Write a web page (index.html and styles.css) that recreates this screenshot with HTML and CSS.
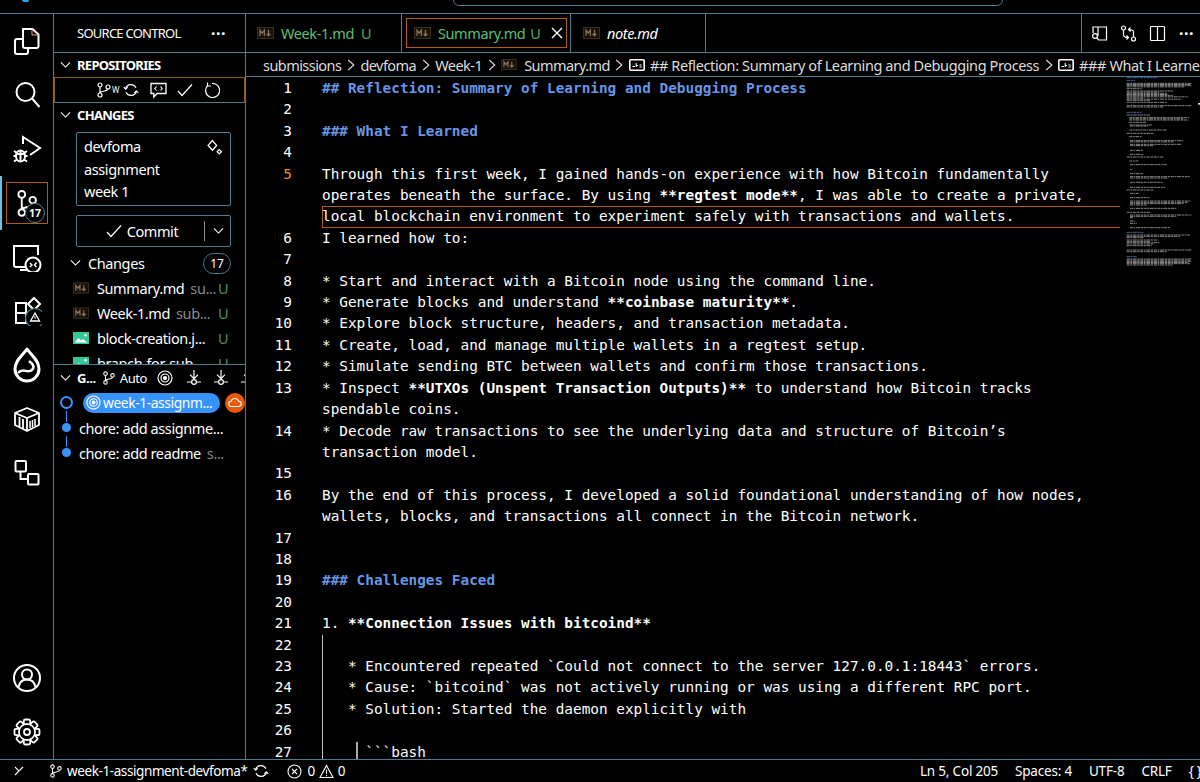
FILE: index.html
```html
<!DOCTYPE html>
<html lang="en">
<head>
<meta charset="utf-8">
<title>Summary.md - VS Code</title>
<link rel="stylesheet" href="styles.css">
</head>
<body>
<svg class="defs" aria-hidden="true">
  <defs>
    <symbol id="md" viewBox="0 0 17 12"><rect x=".5" y=".5" width="16" height="11" fill="#1a120a" stroke="#3d2c1c"/><path d="M3 9V3.200l2.200 3 2.200-3V9M11.500 3v5.600M9.600 6.800l1.900 2 1.900-2" fill="none" stroke="#86725c" stroke-width="1.300"/></symbol>
    <symbol id="img" viewBox="0 0 16 12"><rect width="16" height="12" fill="#37c59a"/><path d="M1.500 10.500l4-4.500 2.500 2.500 2-1.500 4.500 3.500z" fill="#fff"/><circle cx="12.500" cy="3.200" r="1.200" fill="#fff"/></symbol>
    <symbol id="abc" viewBox="0 0 16 12"><rect x=".8" y=".8" width="14.400" height="10.400" rx="1" fill="#000" stroke="#fff" stroke-width="1.600"/><path d="M3.500 7.500h2.500M7.200 4v4M7.200 6.500h1.800M10.500 6h2.200M10.500 8h2.200" stroke="#fff" stroke-width="1.100"/></symbol>
    <symbol id="chev" viewBox="0 0 12 8"><path d="M1 1.200l5 5 5-5" fill="none" stroke="#fff" stroke-width="1.200"/></symbol>
    <symbol id="crumb" viewBox="0 0 8 12"><path d="M1.200 1l5.600 5-5.600 5" fill="none" stroke="#ddd" stroke-width="1.100"/></symbol>
    <symbol id="branch" viewBox="0 0 16 16"><g fill="none" stroke="#fff" stroke-width="1.200"><circle cx="4" cy="3" r="2"/><circle cx="4" cy="13" r="2"/><circle cx="12" cy="5" r="2"/><path d="M4 5v6M12 7c0 2.500-7 1.500-8 4"/></g></symbol>
    <symbol id="sync" viewBox="0 0 16 16"><g fill="none" stroke="#fff" stroke-width="1.200"><path d="M2.600 6.500A5.600 5.600 0 0 1 13 5.800M13.400 9.500A5.600 5.600 0 0 1 3 10.200"/><path d="M.8 5.200l1.900 2 1.900-2M11.400 10.800l1.900-2 1.900 2"/></g></symbol>
    <symbol id="target" viewBox="0 0 16 16"><g fill="none" stroke="#fff" stroke-width="1.200"><circle cx="8" cy="8" r="7"/><circle cx="8" cy="8" r="4"/><circle cx="8" cy="8" r="1.500" fill="#fff"/></g></symbol>
    <symbol id="pull" viewBox="0 0 14 16"><g fill="none" stroke="#fff" stroke-width="1.200"><circle cx="7" cy="12" r="2.400"/><path d="M0 12h4.600M9.400 12H14M7 0v8M3 4.600l4 4 4-4"/></g></symbol>
  </defs>
</svg>

<header class="titlebar">
  <span class="logo-sliver"></span>
  <div class="command-center"></div>
</header>

<div class="workbench">
  <nav class="activity">
    <div class="act">
      <svg viewBox="0 0 30 30"><g fill="none" stroke="#fff" stroke-width="2" stroke-linejoin="round"><path d="M11 3h9.500l6 5.500V20a2 2 0 0 1-2 2H13a2 2 0 0 1-2-2z"/><path d="M11 13H5a2 2 0 0 0-2 2v11a2 2 0 0 0 2 2h9a2 2 0 0 0 2-2v-4"/><path d="M20 3v6h6.500" stroke="#e8a080" stroke-width="1"/></g></svg>
    </div>
    <div class="act">
      <svg viewBox="0 0 30 30"><g fill="none" stroke="#fff" stroke-width="2"><circle cx="13.500" cy="12" r="9"/><path d="M20 18.500l7.500 8.500"/></g></svg>
    </div>
    <div class="act">
      <svg viewBox="0 0 30 30"><g fill="none" stroke="#fff" stroke-width="2"><path d="M11 10V3l17 11-10 7"/><ellipse cx="8.500" cy="22" rx="4.500" ry="5.500"/><path d="M2 17l3 2M15 17l-3 2M1.500 22h2.500M13 22h2.500M2 27.500l3-2M15 27.500l-3-2M4.500 20h8M8.500 17v10"/></g></svg>
    </div>
    <div class="act act-current">
      <div class="act-outline">
        <svg viewBox="0 0 42 42"><g fill="none" stroke="#fff" stroke-width="2"><circle cx="15.500" cy="12" r="3.600"/><circle cx="27" cy="18" r="3.400"/><circle cx="15.500" cy="31" r="3.400"/><path d="M15.500 15.600v12M27 21.500c0 5-10 3-11.500 6"/></g></svg>
        <span class="act-badge">17</span>
      </div>
    </div>
    <div class="act">
      <svg viewBox="0 0 30 30"><g fill="none" stroke="#fff" stroke-width="2"><path d="M14 25H4a2 2 0 0 1-2-2V4h24v9"/><path d="M8 28h7"/><circle cx="21" cy="23" r="7.500" fill="#000"/><path d="M18 21l2 2-2 2M24.500 20.500l-2 2.500 2 2" stroke-width="1.400"/></g></svg>
    </div>
    <div class="act">
      <svg viewBox="0 0 30 30"><g fill="none" stroke="#fff" stroke-width="2"><path d="M14 7H4v20h10zM4 17h10"/><path d="M22 2l6 6-6 6-6-6z"/><circle cx="23" cy="22" r="9.500" fill="#000" stroke="#4d7f92" stroke-width="1.200"/><path d="M23 17l4.500 8h-9z" stroke-width="1.300"/><path d="M23 20v3M23 24v.8" stroke-width="1"/></g></svg>
    </div>
    <div class="act">
      <svg viewBox="0 0 30 36"><g fill="none" stroke="#fff" stroke-width="3" stroke-linejoin="round"><path d="M15 2c4 6 12 11 12 20a12 12 0 0 1-24 0C3 13 11 8 15 2z"/><path d="M6 26c5-6 9 1 14-3 3-3 1-6-3-9" stroke-width="2.500"/></g></svg>
    </div>
    <div class="act">
      <svg viewBox="0 0 30 30"><g fill="none" stroke="#fff" stroke-width="1.800" stroke-linejoin="round"><path d="M3 9l12-5 12 5v12l-12 6-12-6z"/><path d="M3 9l12 5 12-5M15 14v13M7.500 13v10M11 15v10"/><path d="M18 17v7M20.500 16v7M23 15v7" stroke-width="1.500"/></g></svg>
    </div>
    <div class="act">
      <svg viewBox="0 0 30 30"><g fill="none" stroke="#fff" stroke-width="2"><rect x="3.500" y="3" width="10.500" height="10.500" rx="1"/><rect x="16" y="16" width="10.500" height="10.500" rx="1"/><path d="M8.500 13.500V21H16"/></g></svg>
    </div>
    <div class="act act-push">
      <svg viewBox="0 0 30 30"><g fill="none" stroke="#fff" stroke-width="2"><circle cx="15" cy="15" r="13"/><circle cx="15" cy="11.500" r="5"/><path d="M6.500 24c1-5 4.500-7.500 8.500-7.500s7.500 2.500 8.500 7.500"/></g></svg>
    </div>
    <div class="act">
      <svg viewBox="-15 -15 30 30"><g fill="#000" stroke="#fff" stroke-width="1.800"><rect x="-3.200" y="-12.500" width="6.400" height="7" rx="1.500"/><rect x="-3.200" y="-12.500" width="6.400" height="7" rx="1.500" transform="rotate(45)"/><rect x="-3.200" y="-12.500" width="6.400" height="7" rx="1.500" transform="rotate(90)"/><rect x="-3.200" y="-12.500" width="6.400" height="7" rx="1.500" transform="rotate(135)"/><rect x="-3.200" y="-12.500" width="6.400" height="7" rx="1.500" transform="rotate(180)"/><rect x="-3.200" y="-12.500" width="6.400" height="7" rx="1.500" transform="rotate(225)"/><rect x="-3.200" y="-12.500" width="6.400" height="7" rx="1.500" transform="rotate(270)"/><rect x="-3.200" y="-12.500" width="6.400" height="7" rx="1.500" transform="rotate(315)"/><circle r="8"/></g><circle r="7" fill="#000"/><circle r="3" fill="none" stroke="#fff" stroke-width="1.800"/></svg>
    </div>
  </nav>

  <aside class="sidebar">
    <div class="side-title"><span>SOURCE CONTROL</span><span class="dots">···</span></div>
    <div class="side-scroll">
      <div class="sec-head"><svg class="chev"><use href="#chev"/></svg><b>REPOSITORIES</b></div>
      <div class="repo-row">
        <svg class="i16"><use href="#branch"/></svg><span class="tiny-w">W</span>
        <svg class="i16 sp-a"><use href="#sync"/></svg>
        <svg class="i17 sp-b" viewBox="0 0 17 17"><path d="M1 1.500h15v10H7L3.800 15v-3.500H1z" fill="none" stroke="#fff" stroke-width="1.300"/><path d="M6.500 4.500L4.800 6.500l1.700 2M10.500 4.500l1.700 2-1.700 2" fill="none" stroke="#fff" stroke-width="1.100"/></svg>
        <svg class="i16 sp-c" viewBox="0 0 16 16"><path d="M1 9l4 4.500L15 2.500" fill="none" stroke="#fff" stroke-width="1.200"/></svg>
        <svg class="i16 sp-d" viewBox="0 0 16 16"><path d="M4 3.200A7 7 0 1 0 8 1.500M3.500 0.500v3.500h3.500" fill="none" stroke="#fff" stroke-width="1.200"/></svg>
      </div>
      <div class="sec-head sec-changes"><svg class="chev"><use href="#chev"/></svg><b>CHANGES</b></div>
      <div class="msg-box">
        <span>devfoma<br>assignment<br>week 1</span>
        <svg class="spark" viewBox="0 0 16 16"><path d="M6 1.500L10 6 6 10.500 2 6z" fill="none" stroke="#fff" stroke-width="1.300"/><path d="M12.500 10l2 2-2 2-2-2z" fill="none" stroke="#fff" stroke-width="1.200"/></svg>
      </div>
      <div class="commit">
        <span class="commit-main"><svg class="i16" viewBox="0 0 16 16"><path d="M1 9l4 4.500L15 2.500" fill="none" stroke="#fff" stroke-width="1.200"/></svg>Commit</span>
        <span class="commit-sep"></span>
        <svg class="chev commit-chev"><use href="#chev"/></svg>
      </div>
      <div class="changes-row"><svg class="chev"><use href="#chev"/></svg><span class="changes-label">Changes</span><span class="count">17</span></div>
      <div class="file"><svg class="ficon"><use href="#md"/></svg><span class="fname">Summary.md</span><span class="fdir">su...</span><span class="fu">U</span></div>
      <div class="file"><svg class="ficon"><use href="#md"/></svg><span class="fname">Week-1.md</span><span class="fdir">sub...</span><span class="fu">U</span></div>
      <div class="file"><svg class="ficon"><use href="#img"/></svg><span class="fname">block-creation.j...</span><span class="fu">U</span></div>
      <div class="file"><svg class="ficon"><use href="#img"/></svg><span class="fname">branch-for-sub</span><span class="fu">U</span></div>
    </div>
    <div class="graph">
      <div class="graph-head">
        <svg class="chev"><use href="#chev"/></svg><b>G...</b>
        <svg class="i14"><use href="#branch"/></svg><span class="auto">Auto</span>
        <svg class="i16 tgt"><use href="#target"/></svg>
        <svg class="pull pl1"><use href="#pull"/></svg>
        <svg class="pull"><use href="#pull"/></svg>
        <svg class="pull"><use href="#pull"/></svg>
      </div>
      <div class="gr-row">
        <span class="node-ring"></span>
        <span class="pill"><svg class="i15"><use href="#target"/></svg>week-1-assignm...</span>
        <span class="cloud"><svg viewBox="0 0 16 12"><path d="M4 10.500a3 3 0 0 1-.4-6 4.500 4.500 0 0 1 8.500 0 3 3 0 0 1 0 6z" fill="none" stroke="#fff" stroke-width="1.200"/></svg></span>
      </div>
      <div class="gr-row"><span class="node-dot"></span><span class="gr-text">chore: add assignme...</span></div>
      <div class="gr-row"><span class="node-dot"></span><span class="gr-text">chore: add readme</span><span class="gr-dim">s...</span></div>
    </div>
  </aside>

  <main class="editor-part">
    <div class="tabs">
      <div class="tab tab-1"><svg class="tabicon"><use href="#md"/></svg><span class="green">Week-1.md</span><span class="green-u">U</span></div>
      <div class="tab tab-2"><div class="tab-inner"><svg class="tabicon"><use href="#md"/></svg><span class="green">Summary.md</span><span class="green-u">U</span><svg class="tab-x" viewBox="0 0 12 12"><path d="M1 1l10 10M11 1L1 11" stroke="#fff" stroke-width="1.400"/></svg></div></div>
      <div class="tab tab-3"><svg class="tabicon"><use href="#md"/></svg><em>note.md</em></div>
      <div class="tab-fill"></div>
      <div class="tab-actions">
        <svg class="i17" viewBox="0 0 17 17"><path d="M7 11V2H2v6M7 2h8.500v13H7.500M7 2v6" fill="none" stroke="#fff" stroke-width="1.200"/><circle cx="4" cy="11" r="2.400" fill="none" stroke="#fff" stroke-width="1.200"/><path d="M5.800 13l2 2" stroke="#fff" stroke-width="1.200"/></svg>
        <svg class="i17" viewBox="0 0 17 17"><g fill="none" stroke="#fff" stroke-width="1.200"><circle cx="3.500" cy="3" r="2"/><circle cx="13.500" cy="14" r="2"/><path d="M3.500 5v5c0 2 2 2.500 5 2.500M6.500 10.500l2 2-2 2M13.500 12V7c0-2-2-2.500-5-2.500M10.500 2.500l-2 2 2 2"/></g></svg>
        <svg class="i17" viewBox="0 0 17 17"><path d="M2.500 1.500h12a1 1 0 0 1 1 1v12a1 1 0 0 1-1 1h-12a1 1 0 0 1-1-1v-12a1 1 0 0 1 1-1zM8.500 1.500v14" fill="none" stroke="#fff" stroke-width="1.200"/></svg>
        <span class="dots">···</span>
      </div>
    </div>
    <div class="crumbs">
      <span>submissions</span><svg class="crumb"><use href="#crumb"/></svg>
      <span>devfoma</span><svg class="crumb"><use href="#crumb"/></svg>
      <span>Week-1</span><svg class="crumb"><use href="#crumb"/></svg>
      <svg class="c-md"><use href="#md"/></svg><span>Summary.md</span><svg class="crumb"><use href="#crumb"/></svg>
      <svg class="c-abc"><use href="#abc"/></svg><span class="crumb-head">## Reflection: Summary of Learning and Debugging Process</span><svg class="crumb"><use href="#crumb"/></svg>
      <svg class="c-abc"><use href="#abc"/></svg><span class="crumb-head">### What I Learned</span>
    </div>
    <div class="editor">
      <div class="ln"><span class="num">1</span><code class="h">## Reflection: Summary of Learning and Debugging Process</code></div>
      <div class="ln"><span class="num">2</span><code></code></div>
      <div class="ln"><span class="num">3</span><code class="h">### What I Learned</code></div>
      <div class="ln"><span class="num">4</span><code></code></div>
      <div class="ln"><span class="num cur-num">5</span><code>Through this first week, I gained hands-on experience with how Bitcoin fundamentally</code></div>
      <div class="ln"><span class="num"></span><code>operates beneath the surface. By using <b>**regtest mode**</b>, I was able to create a private,</code></div>
      <div class="ln"><span class="num"></span><code class="cur">local blockchain environment to experiment safely with transactions and wallets.</code></div>
      <div class="ln"><span class="num">6</span><code>I learned how to:</code></div>
      <div class="ln"><span class="num">7</span><code></code></div>
      <div class="ln"><span class="num">8</span><code>* Start and interact with a Bitcoin node using the command line.</code></div>
      <div class="ln"><span class="num">9</span><code>* Generate blocks and understand <b>**coinbase maturity**</b>.</code></div>
      <div class="ln"><span class="num">10</span><code>* Explore block structure, headers, and transaction metadata.</code></div>
      <div class="ln"><span class="num">11</span><code>* Create, load, and manage multiple wallets in a regtest setup.</code></div>
      <div class="ln"><span class="num">12</span><code>* Simulate sending BTC between wallets and confirm those transactions.</code></div>
      <div class="ln"><span class="num">13</span><code>* Inspect <b>**UTXOs (Unspent Transaction Outputs)**</b> to understand how Bitcoin tracks</code></div>
      <div class="ln"><span class="num"></span><code>spendable coins.</code></div>
      <div class="ln"><span class="num">14</span><code>* Decode raw transactions to see the underlying data and structure of Bitcoin’s</code></div>
      <div class="ln"><span class="num"></span><code>transaction model.</code></div>
      <div class="ln"><span class="num">15</span><code></code></div>
      <div class="ln"><span class="num">16</span><code>By the end of this process, I developed a solid foundational understanding of how nodes,</code></div>
      <div class="ln"><span class="num"></span><code>wallets, blocks, and transactions all connect in the Bitcoin network.</code></div>
      <div class="ln"><span class="num">17</span><code></code></div>
      <div class="ln"><span class="num">18</span><code></code></div>
      <div class="ln"><span class="num">19</span><code class="h">### Challenges Faced</code></div>
      <div class="ln"><span class="num">20</span><code></code></div>
      <div class="ln"><span class="num">21</span><code>1. <b>**Connection Issues with bitcoind**</b></code></div>
      <div class="ln"><span class="num">22</span><code class="guide"></code></div>
      <div class="ln"><span class="num">23</span><code class="guide">   * Encountered repeated `Could not connect to the server 127.0.0.1:18443` errors.</code></div>
      <div class="ln"><span class="num">24</span><code class="guide">   * Cause: `bitcoind` was not actively running or was using a different RPC port.</code></div>
      <div class="ln"><span class="num">25</span><code class="guide">   * Solution: Started the daemon explicitly with</code></div>
      <div class="ln"><span class="num">26</span><code class="guide"></code></div>
      <div class="ln"><span class="num">27</span><code class="guide guide2">     ```bash</code></div>
      <svg class="minimap" viewBox="0 6 270 600" aria-hidden="true">
        <path class="mm-blue" d="M50 8H145M50 16H75M50 112H95M50 472H100M50 545H80"/>
        <path class="mm-text" d="M50 25H245M50 28.500H240M50 32H245M50 35.500H225M50 41H95M50 48H190M50 51.500H150M50 55H170M50 58.500H175M50 62H190M50 65.500H235M50 69H100M50 72.500H215M50 76H120M50 82H170M50 92H245M50 96H160M50 120H120M58 128H240M58 131.500H220M58 135H235M58 142H110M58 150H125M60 153H115M58 165H170M50 175H130M58 185H95M60 197H220M60 200.500H190M60 208H215M60 212H130M60 226H100M60 238H100M50 246H160M58 258H85M60 269H170M60 283H65M60 296H100M60 305H240M60 309H175M60 322H160M60 337H165M50 345H130M60 355H85M60 368H120M60 378H240M60 382H235M60 386H220M60 390H110M60 400H200M50 412H120M60 420H245M60 424H200M60 428H70M60 438H75M60 445H80M60 458H180M50 480H240M50 484H210M50 488H100M50 495H145M50 499H120M50 503H150M50 507H130M50 512H125M50 525H245M50 530H170M50 552H245M50 555.500H240M50 559H245M50 562.500H235M50 566H240M50 570H190"/>
        <rect class="mm-tick" x="264" y="84" width="6" height="5"/>
      </svg>
    </div>
  </main>
</div>

<footer class="status">
  <svg class="st-remote" viewBox="0 0 10 12"><path d="M1 2l4 4-4 4M9 2L5.500 5.500" fill="none" stroke="#fff" stroke-width="1.100"/></svg>
  <svg class="i14 st-branch"><use href="#branch"/></svg><span>week-1-assignment-devfoma*</span>
  <svg class="i16 st-sync"><use href="#sync"/></svg>
  <svg class="i15 st-err" viewBox="0 0 15 15"><circle cx="7.500" cy="7.500" r="6.500" fill="none" stroke="#fff" stroke-width="1.100"/><path d="M5 5l5 5M10 5l-5 5" stroke="#fff" stroke-width="1.100"/></svg><span class="st-n">0</span>
  <svg class="i15 st-warn" viewBox="0 0 15 15"><path d="M7.500 1.500L14 13.500H1z" fill="none" stroke="#fff" stroke-width="1.100"/><path d="M7.500 5.500v4.500M7.500 11v1.200" stroke="#fff" stroke-width="1.100"/></svg><span class="st-n">0</span>
  <div class="st-right">
    <span>Ln 5, Col 205</span><span>Spaces: 4</span><span>UTF-8</span><span>CRLF</span><span>{ }</span>
  </div>
</footer>
</body>
</html>
```

FILE: styles.css
```css
* { box-sizing: border-box; }
html, body { margin: 0; height: 782px; overflow: hidden; background: #000; }
body {
  color: #fff;
  font-family: "Noto Sans", "Open Sans", sans-serif;
  font-size: 14px;
  letter-spacing: -0.4px;
  display: flex;
  flex-direction: column;
  width: 1200px;
}
svg { display: block; flex: none; }
.defs { width: 0; height: 0; position: absolute; }
.i14 { width: 14px; height: 14px; }
.i15 { width: 15px; height: 15px; }
.i16 { width: 16px; height: 16px; }
.i17 { width: 17px; height: 17px; }

/* title bar */
.titlebar { height: 14px; border-bottom: 1px solid #4d7f92; position: relative; flex: none; }
.command-center {
  position: absolute; left: 453px; top: -10px; width: 550px; height: 16px;
  border: 1px solid #4d7f92; border-radius: 6px;
}
.logo-sliver {
  position: absolute; left: 22px; top: 0; width: 7px; height: 2px;
  background: #2f9fe8; border-radius: 0 0 4px 4px;
}

.workbench { display: flex; flex: none; height: 745px; }

/* activity bar */
.activity {
  width: 54px; flex: none; display: flex; flex-direction: column;
  border-right: 1px solid #4d7f92;
}
.act { height: 54px; flex: none; display: flex; align-items: center; justify-content: center; position: relative; }
.act > svg { width: 30px; height: 30px; }
.act:nth-child(7) > svg { height: 36px; }
.act-push { margin-top: auto; }
.act-current { border-left: 2px solid #6fc3df; justify-content: flex-start; }
.act-outline { margin-left: 4px; width: 42px; height: 42px; border: 1px solid #b05f0e; position: relative; }
.act-outline svg { width: 40px; height: 40px; }
.act-badge {
  position: absolute; left: 18px; top: 20px; width: 20px; height: 20px; border-radius: 50%;
  background: #000; border: 1px solid #4d7f92; font-size: 10.500px; font-weight: 700; letter-spacing: 0;
  display: flex; align-items: center; justify-content: center;
}

/* side bar */
.sidebar { width: 192px; flex: none; border-right: 1px solid #4d7f92; display: flex; flex-direction: column; }
.side-title {
  height: 39px; flex: none; border-bottom: 1px solid #4d7f92; padding: 0 19px 0 23px;
  display: flex; align-items: center; justify-content: space-between; font-size: 13px; letter-spacing: -0.750px;
}
.dots { font-weight: 700; font-size: 16px; letter-spacing: 0.500px; }
.side-scroll { height: 312px; flex: none; overflow: hidden; border-bottom: 1px solid #4d7f92; }
.chev { width: 11px; height: 8px; }
.sec-head { height: 24px; display: flex; align-items: center; padding-left: 6px; gap: 6px; font-size: 13px; letter-spacing: -0.700px; }
.repo-row {
  height: 26px; border: 1px solid #8a5a1f; border-bottom: 1px solid #4d7f92;
  display: flex; align-items: center; padding-left: 41px;
}
.tiny-w { font-size: 8px; width: 6px; line-height: 1; letter-spacing: -1px; }
.sp-a { margin-left: 5px; }
.sp-b { margin-left: 11px; }
.sp-c { margin-left: 10px; }
.sp-d { margin-left: 11px; }
.sec-changes { margin-bottom: 5px; }
.msg-box {
  margin-left: 22px; width: 155px; height: 74px; border: 1px solid #4d7f92; border-radius: 2px;
  padding: 2px 7px; font-size: 14.500px; line-height: 22.500px; position: relative;
}
.spark { position: absolute; right: 7px; top: 6px; width: 17px; height: 17px; }
.commit {
  margin: 9px 0 0 22px; width: 155px; height: 32px; border: 1px solid #4d7f92; border-radius: 2px;
  display: flex; align-items: center; font-size: 14.500px;
}
.commit-main { flex: 1; display: flex; align-items: center; justify-content: center; gap: 5px; padding: 0 0 1px 3px; }
.commit-sep { width: 1px; height: 20px; background: #888; }
.commit-chev { margin: 0 6px 0 8px; }
.changes-row { height: 24px; margin-top: 4px; display: flex; align-items: center; padding-left: 16px; font-size: 14.500px; }
.changes-label { margin-left: 7px; }
.count {
  margin-left: auto; margin-right: 14px; width: 28px; height: 21px; border-radius: 11px; border: 1px solid #4d7f92;
  font-size: 12px; letter-spacing: 0; display: flex; align-items: center; justify-content: center;
}
.file { height: 25px; display: flex; align-items: center; padding-left: 19px; font-size: 14.500px; position: relative; white-space: nowrap; }
.ficon { width: 16px; height: 12px; margin-right: 8px; }
.fdir { color: #8a8a8a; margin-left: 6px; }
.fu { position: absolute; left: 164px; color: #4f8f5f; }

.graph-head { height: 25px; display: flex; align-items: center; padding-left: 6px; font-size: 13px; overflow: hidden; white-space: nowrap; }
.graph-head b { margin-left: 6px; }
.graph-head .i14 { margin-left: 6px; }
.auto { margin-left: 4px; }
.tgt { margin-left: 10px; }
.pull { width: 14px; height: 16px; margin-left: 13px; }
.pl1 { margin-left: 14px; }
.gr-row { height: 25px; display: flex; align-items: center; position: relative; font-size: 14.500px; white-space: nowrap; padding-left: 25px; }
.node-ring { position: absolute; left: 6px; top: 6px; width: 13px; height: 13px; border: 2px solid #3794ff; border-radius: 50%; }
.node-dot { position: absolute; left: 8px; top: 8px; width: 9px; height: 9px; background: #3794ff; border-radius: 50%; }
.node-dot::before { content: ""; position: absolute; left: 4px; top: -12px; width: 1px; height: 11px; background: #3794ff; }
.pill {
  margin-left: 4px; height: 20px; width: 137px; border-radius: 10px; background: #3794ff;
  display: flex; align-items: center; gap: 2px; padding-left: 3px; font-size: 13.800px; overflow: hidden;
}
.cloud { margin-left: 5px; width: 20px; height: 20px; border-radius: 50%; background: #e8590c; display: flex; align-items: center; justify-content: center; flex: none; }
.cloud svg { width: 14px; height: 11px; }
.gr-dim { color: #8a8a8a; margin-left: 6px; }

/* editor column */
.editor-part { flex: 1; min-width: 0; display: flex; flex-direction: column; }
.tabs { height: 39px; flex: none; display: flex; border-bottom: 1px solid #4d7f92; }
.tab { height: 38px; flex: none; display: flex; align-items: center; border-right: 1px solid #4d7f92; font-size: 14.500px; white-space: nowrap; }
.tab-1 { width: 156px; padding-left: 11px; }
.tab-2 { width: 169px; padding: 4px 3px 4px 4px; }
.tab-3 { width: 135px; padding-left: 12px; }
.tab-inner { flex: 1; min-width: 0; height: 30px; border: 1px solid #b05f0e; display: flex; align-items: center; padding-left: 7px; }
.tabicon { width: 17px; height: 12px; margin-right: 7px; }
.green { color: #5cc070; }
.green-u { color: #5cc070; margin-left: 7px; opacity: .85; }
.tab-inner .green-u { margin-left: 5px; }
.tab-x { width: 12px; height: 12px; margin-left: 10px; }
.tab-fill { flex: 1; border-right: 1px solid #4d7f92; }
.tab-actions { width: 118px; flex: none; display: flex; align-items: center; padding-left: 9px; gap: 12px; }
.tab-actions .dots { margin-left: 1px; }
.crumbs {
  height: 24px; flex: none; border-bottom: 1px solid #4d7f92; padding-left: 17px;
  display: flex; align-items: center; font-size: 14.500px; letter-spacing: -0.550px; color: #ddd; white-space: nowrap; overflow: hidden;
}
.crumb-head { letter-spacing: -0.390px; }
.crumb { width: 8px; height: 12px; margin: 0 5.500px; }
.c-md { width: 16px; height: 11px; margin-right: 7px; }
.c-abc { width: 16px; height: 12px; margin-right: 5px; }

.editor { flex: 1; overflow: hidden; position: relative; padding-top: 1px; font-family: "DejaVu Sans Mono", monospace; font-size: 14.380px; letter-spacing: 0; }
.ln { display: flex; height: 21.420px; line-height: 21.420px; }
.num { width: 46px; margin-right: 30px; flex: none; text-align: right; }
.cur-num { color: #f08a24; }
code { font: inherit; white-space: pre; display: block; width: 798px; flex: none; height: 100%; }
code b { font-weight: 700; }
.h { color: #6796e6; font-weight: 700; }
.cur { box-shadow: inset 1px 0 #b05f0e, inset 0 1px #b05f0e, inset 0 -1px #b05f0e; }
.guide { box-shadow: inset 1px 0 #bbb; }
.guide2 { background: linear-gradient(#aaa, #aaa) 34px 0 / 2px 100% no-repeat; }
.minimap { position: absolute; right: 0; top: 0; width: 90px; height: 200px; }
.mm-blue { stroke: #4d74b8; stroke-width: 2.600; fill: none; stroke-dasharray: 10 2 6 2; }
.mm-text { stroke: #9a9a9a; stroke-width: 2.600; fill: none; stroke-dasharray: 9 2 5 2 12 2 7 2; }
.mm-tick { fill: #ddd; }

/* status bar */
.status {
  height: 23px; flex: none; border-top: 1px solid #4d7f92; display: flex; align-items: center;
  font-size: 13.500px; padding-left: 14px; white-space: nowrap;
}
.st-remote { width: 10px; height: 12px; }
.st-branch { margin: 0 4px 0 25px; }
.st-sync { margin-left: 6px; }
.st-err { margin: 0 5px 0 18px; }
.st-warn { margin: 0 4px 0 4px; }
.st-right { margin-left: auto; display: flex; gap: 17px; width: 280px; overflow: hidden; letter-spacing: -0.200px; }
```
